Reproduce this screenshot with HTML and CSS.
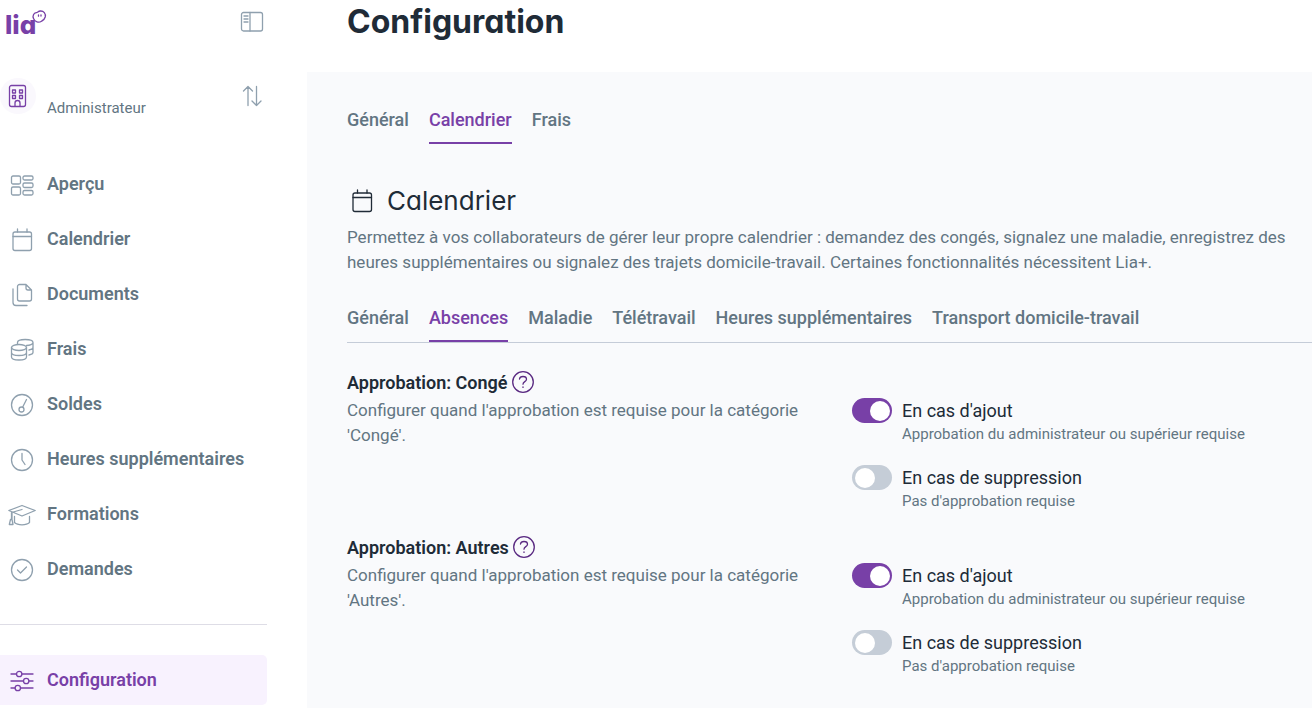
FILE: index.html
```html
<!DOCTYPE html>
<html lang="fr">
	<head>
		<meta charset="utf-8" />
		<meta name="viewport" content="width=device-width, initial-scale=1" />
		<title>Lia - Configuration</title>
		<link rel="stylesheet" href="styles.css">
	</head>
	<body>
		<aside class="sidebar">
			<div class="sidebar-top">
				<a class="logo" href="#" aria-label="lia">
					<svg width="50" height="44" viewBox="0 0 50 44">
						<text class="logo-text" x="5" y="34">lia</text>
						<path class="logo-bean" d="M33.500 18.500c-1.200-2.800.2-5.300 2.800-5.800 1.500-.3 1.800-1.500 4-1.700 3.400-.3 5.700 2.700 4.900 6-.7 2.600-2.300 3.300-3.700 4.200-2.700 1.900-6.600 1-8-2.700z" />
						<path class="logo-eyes" d="M38.500 15v1.200M41 14.800v1.200" />
					</svg>
				</a>
				<button class="icon-btn" type="button" aria-label="Réduire le menu">
					<svg class="icon" width="24" height="24" viewBox="0 0 24 24">
						<rect x="1.500" y="2.500" width="21" height="18.500" rx="2" />
						<path d="M10 2.500v18.500M4 6h4M4 9h4M4 12h4" />
					</svg>
				</button>
			</div>

			<div class="company">
				<span class="company-avatar">
					<svg class="icon" width="24" height="24" viewBox="0 0 24 24">
						<rect x="3.500" y="1.500" width="16" height="21" rx="2" />
						<path d="M6.500 6h3v3h-3zM13.500 6h3v3h-3zM6.500 11.500h3v3h-3zM13.500 11.500h3v3h-3zM9 22v-3a2.500 2.500 0 0 1 5 0v3" />
					</svg>
				</span>
				<span class="company-role">Administrateur</span>
				<button class="icon-btn" type="button" aria-label="Changer de profil">
					<svg class="icon" width="24" height="24" viewBox="0 0 24 24">
						<path d="M8 21.500V2.500M3.500 7L8 2.500 12.500 7M16.500 2.500v19M12 17l4.500 4.500L21 17" />
					</svg>
				</button>
			</div>

			<nav class="menu">
				<a href="#">
					<svg class="icon" viewBox="0 0 28 24">
						<rect x="3.500" y="3" width="9" height="8" rx="1.500" />
						<rect x="3.500" y="14" width="9" height="8" rx="1.500" />
						<rect x="15" y="3" width="10" height="4" rx="1.500" />
						<rect x="15" y="10" width="10" height="4.500" rx="1.500" />
						<rect x="15" y="17.500" width="10" height="4.500" rx="1.500" />
					</svg>
					Aperçu
				</a>
				<a href="#">
					<svg class="icon" viewBox="0 0 28 24">
						<rect x="5" y="4" width="18.500" height="18.500" rx="2" />
						<path d="M5 8.500h18.500M9.500 1v3M19 1v3" />
					</svg>
					Calendrier
				</a>
				<a href="#">
					<svg class="icon" viewBox="0 0 28 24">
						<path d="M18 1.500h-6.500a2 2 0 0 0-2 2V16a2 2 0 0 0 2 2h10a2 2 0 0 0 2-2V7zM18 1.500V5a2 2 0 0 0 2 2h3.500M5 6v13.500a3 3 0 0 0 3 3h11" />
					</svg>
					Documents
				</a>
				<a href="#">
					<svg class="icon" viewBox="0 0 28 24">
						<ellipse cx="11" cy="9.500" rx="7.500" ry="3" />
						<path d="M3.500 9.500V19c0 1.700 3.400 3 7.500 3s7.500-1.300 7.500-3V9.500M3.500 14.500c0 1.700 3.400 3 7.500 3s7.500-1.300 7.500-3M9.500 4.500c0-1.700 3.400-3 7.700-3S25 2.800 25 4.500 22 7.500 18.500 7.500M25 4.500v10c0 1-1.500 2-4 2.500M25 9.500c0 1-1.500 2-4 2.500M9.500 4.500V6" />
					</svg>
					Frais
				</a>
				<a href="#">
					<svg class="icon" viewBox="0 0 28 24">
						<circle cx="14" cy="12" r="10.500" />
						<circle cx="13.500" cy="16.500" r="2.500" />
						<path d="M14.600 14.300L18.500 6.500" />
					</svg>
					Soldes
				</a>
				<a href="#">
					<svg class="icon" viewBox="0 0 28 24">
						<circle cx="14" cy="12" r="10.500" />
						<path d="M14 5.500V12l3 4.500" />
					</svg>
					Heures supplémentaires
				</a>
				<a href="#">
					<svg class="icon" viewBox="0 0 28 24">
						<path d="M.8 7.500L14 2.500l13.200 5L14 13zM14 6.500L3.500 9.500v7M2.500 16.500l-1.200 5H5l-1-5V9.500M6.500 13.500v6c1.500 1.500 4.500 2.300 7.500 2.300s6-.8 7.500-2.300v-6" />
					</svg>
					Formations
				</a>
				<a href="#">
					<svg class="icon" viewBox="0 0 28 24">
						<circle cx="14" cy="12" r="10.500" />
						<path d="M9.500 12l3 3L18.500 9" />
					</svg>
					Demandes
				</a>
				<hr />
				<a class="active" href="#">
					<svg class="icon" viewBox="0 0 28 24">
						<path d="M3 5h5.500M14 5h11M3 12h12.500M21 12h4M3 19h4M12.500 19H25" />
						<circle cx="11.200" cy="5" r="2.700" />
						<circle cx="18.200" cy="12" r="2.700" />
						<circle cx="9.800" cy="19" r="2.700" />
					</svg>
					Configuration
				</a>
			</nav>
		</aside>

		<main class="main">
			<header class="page-header">
				<h1>Configuration</h1>
			</header>

			<div class="content">
				<nav class="tabs">
					<a href="#">Général</a>
					<a class="active" href="#">Calendrier</a>
					<a href="#">Frais</a>
				</nav>

				<h2>
					<svg class="icon" width="30" height="24" viewBox="0 0 28 24">
						<rect x="5" y="4" width="18.500" height="18.500" rx="2" />
						<path d="M5 8.500h18.500M9.500 1v3M19 1v3" />
					</svg>
					Calendrier
				</h2>
				<p>Permettez à vos collaborateurs de gérer leur propre calendrier : demandez des congés, signalez une maladie, enregistrez des heures supplémentaires ou signalez des trajets domicile-travail. Certaines fonctionnalités nécessitent Lia+.</p>

				<nav class="tabs tabs-line">
					<a href="#">Général</a>
					<a class="active" href="#">Absences</a>
					<a href="#">Maladie</a>
					<a href="#">Télétravail</a>
					<a href="#">Heures supplémentaires</a>
					<a href="#">Transport domicile-travail</a>
				</nav>

				<section class="setting">
					<h3>
						Approbation: Congé
						<button class="help" type="button" aria-label="Aide">
							<svg class="icon" width="24" height="24" viewBox="0 0 24 24">
								<circle cx="12" cy="12" r="10.300" />
								<path d="M8.500 9c.2-1.500 1.600-2.500 3.500-2.500s3.500 1.100 3.500 2.700c0 2.600-3.500 2.300-3.500 5M12 16.800v.6" />
							</svg>
						</button>
					</h3>
					<div class="setting-row">
						<p>Configurer quand l'approbation est requise pour la catégorie 'Congé'.</p>
						<div class="switches">
							<div class="switch">
								<input type="checkbox" id="leaveAdd" checked />
								<label for="leaveAdd">En cas d'ajout <small>Approbation du administrateur ou supérieur requise</small></label>
							</div>
							<div class="switch">
								<input type="checkbox" id="leaveRemove" />
								<label for="leaveRemove">En cas de suppression <small>Pas d'approbation requise</small></label>
							</div>
						</div>
					</div>
				</section>

				<section class="setting">
					<h3>
						Approbation: Autres
						<button class="help" type="button" aria-label="Aide">
							<svg class="icon" width="24" height="24" viewBox="0 0 24 24">
								<circle cx="12" cy="12" r="10.300" />
								<path d="M8.500 9c.2-1.500 1.600-2.500 3.500-2.500s3.500 1.100 3.500 2.700c0 2.600-3.500 2.300-3.500 5M12 16.800v.6" />
							</svg>
						</button>
					</h3>
					<div class="setting-row">
						<p>Configurer quand l'approbation est requise pour la catégorie 'Autres'.</p>
						<div class="switches">
							<div class="switch">
								<input type="checkbox" id="otherAdd" checked />
								<label for="otherAdd">En cas d'ajout <small>Approbation du administrateur ou supérieur requise</small></label>
							</div>
							<div class="switch">
								<input type="checkbox" id="otherRemove" />
								<label for="otherRemove">En cas de suppression <small>Pas d'approbation requise</small></label>
							</div>
						</div>
					</div>
				</section>
			</div>
		</main>
	</body>
</html>
```
FILE: styles.css
```css
* {
	box-sizing: border-box;
}
body {
	display: flex;
	gap: 40px;
	min-height: 100vh;
	margin: 0;
	background: #fff;
	color: #627582;
	font: 400 18px/25px Roboto, Arial, sans-serif;
}
h1,
h2,
h3,
p {
	margin: 0;
}
p {
	font-size: 17px;
}
a {
	color: inherit;
	text-decoration: none;
}
button {
	display: flex;
	padding: 0;
	border: 0;
	background: none;
	color: inherit;
	cursor: pointer;
}
.icon {
	flex: none;
	fill: none;
	stroke: currentColor;
	stroke-width: 1.3;
	stroke-linecap: round;
	stroke-linejoin: round;
}

/* sidebar */
.sidebar {
	flex: none;
	width: 267px;
}
.sidebar-top {
	display: flex;
	justify-content: space-between;
	align-items: center;
	height: 44px;
	padding-right: 3px;
}
.logo {
	display: flex;
	color: #7840a7;
}
.logo-text {
	fill: currentColor;
	font: 800 26px Inter, sans-serif;
	font-feature-settings: "cv11";
}
.logo-bean,
.logo-eyes {
	fill: #fff;
	stroke: currentColor;
	stroke-width: 1.3;
	stroke-linecap: round;
}
.icon-btn {
	color: #8fa0ae;
}
.company {
	display: flex;
	align-items: center;
	height: 40px;
	margin: 32px 0 43px;
	padding-right: 3px;
}
.company-avatar {
	display: flex;
	justify-content: center;
	align-items: center;
	width: 36px;
	height: 36px;
	margin-right: 11px;
	border-radius: 50%;
	background: #faf8fd;
	color: #7840a7;
}
.company-role {
	flex: 1;
	padding-top: 24px;
	font-size: 15px;
}
.menu {
	display: flex;
	flex-direction: column;
	gap: 5px;
}
.menu a {
	display: flex;
	align-items: center;
	gap: 11px;
	height: 50px;
	padding: 0 0 2px 8px;
	border-radius: 0 5px 5px 0;
	font-weight: 600;
}
.menu .icon {
	width: 28px;
	height: 24px;
	margin-top: 3px;
	color: #8fa0ae;
}
.menu a.active {
	background: #f8f2fe;
	color: #7840a7;
}
.menu a.active .icon {
	color: #7840a7;
}
.menu hr {
	width: 100%;
	margin: 25px 0;
	border: 0;
	border-top: 1px solid #dedde6;
}

/* page */
.main {
	display: flex;
	flex: 1;
	flex-direction: column;
	min-width: 0;
}
.page-header {
	height: 72px;
	padding-left: 40px;
}
h1 {
	color: #202b37;
	font: 700 32px/44px Inter, sans-serif;
	font-feature-settings: "cv11";
}
.content {
	flex: 1;
	padding: 35px 0 20px 40px;
	background: #f9fafc;
}
.tabs {
	display: flex;
	gap: 20px;
	font-weight: 500;
}
.tabs a {
	padding-bottom: 10px;
	border-bottom: 2px solid transparent;
	white-space: nowrap;
}
.tabs a.active {
	border-color: #7840a7;
	color: #7840a7;
}
.tabs-line {
	margin-top: 30px;
	border-bottom: 1px solid #c5ccd8;
}
h2 {
	display: flex;
	align-items: center;
	gap: 10px;
	margin: 39px 0 6px;
	color: #202b37;
	font: 400 26px/36px Inter, sans-serif;
	font-feature-settings: "cv11";
}

/* settings */
.setting {
	margin-bottom: 22px;
}
.tabs-line + .setting {
	margin-top: 26px;
}
h3 {
	display: flex;
	align-items: center;
	gap: 3px;
	height: 26px;
	margin-bottom: 3px;
	color: #202b37;
	font-size: 18px;
	font-weight: 600;
}
.help {
	color: #5a2a82;
}
.setting-row {
	display: grid;
	grid-template-columns: minmax(0, 465px) 1fr;
	column-gap: 40px;
}
.switches {
	display: grid;
	gap: 20px;
}
.switch {
	display: flex;
	gap: 10px;
}
.switch label {
	color: #202b37;
}
.switch small {
	display: block;
	color: #627582;
	font-size: 15px;
	line-height: 22px;
}
.switch input {
	flex: none;
	appearance: none;
	width: 40px;
	height: 25px;
	margin: 0;
	padding: 3px 2px 2px 3px;
	border-radius: 13px;
	background: #c5cdd7;
	cursor: pointer;
}
.switch input::before {
	content: "";
	display: block;
	width: 20px;
	height: 20px;
	border-radius: 50%;
	background: #fff;
}
.switch input:checked {
	background: #7840a7;
}
.switch input:checked::before {
	margin-left: auto;
}
```
